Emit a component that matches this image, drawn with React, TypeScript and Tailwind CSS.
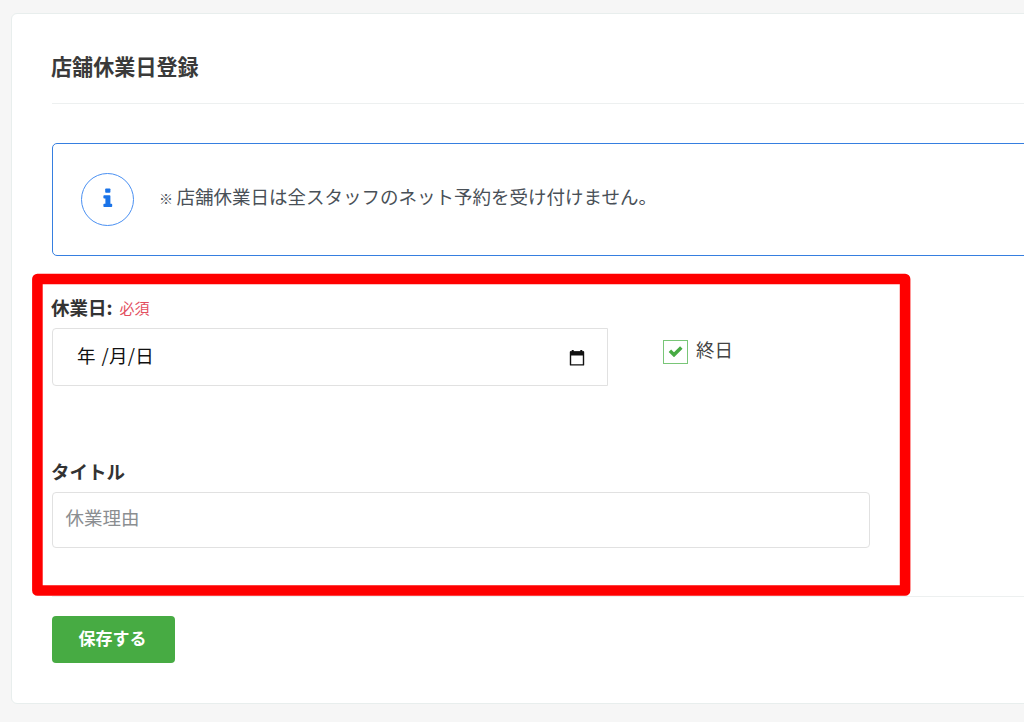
import React from "react";

const InfoIcon = () => (
  <div className="flex h-[53px] w-[53px] shrink-0 items-center justify-center rounded-full border border-[#4a90f2]">
    <svg className="-mt-1" width="10" height="20" viewBox="0 0 10 20" fill="#1a73e8">
      <rect x="2.2" y="0.4" width="5.2" height="4.4" rx="0.8" />
      <path d="M1.2 7.3h5.4a.8.8 0 0 1 .8.8v7.600h1a.8.8 0 0 1 .8.8v1.800a.8.8 0 0 1-.8.8H1.200a.8.8 0 0 1-.8-.8v-1.800a.8.8 0 0 1 .8-.8h1.200v-5.200H1.200a.8.8 0 0 1-.8-.8V8.100a.8.8 0 0 1 .8-.8z" />
    </svg>
  </div>
);

const CalendarIcon = () => (
  <svg className="mt-px" width="16" height="18" viewBox="0 0 16 18" fill="none">
    <path d="M1.500 3h13v12.900h-13z" stroke="#111" strokeWidth="1.4" strokeLinejoin="round" />
    <path d="M1 2.500h14v4H1zM2.700 1h2v2h-2zM11.300 1h2v2h-2z" fill="#111" />
  </svg>
);

const Checkbox = ({ label }: { label: string }) => (
  <label className="flex items-center">
    <span className="mt-px flex h-6 w-[25px] items-center justify-center border border-[#79c678]">
      <svg className="-mt-0.5" width="15" height="12" viewBox="0 0 15 12" fill="none">
        <path d="M1.900 5.800l4.100 4L13.300 2.400" stroke="#47ab43" strokeWidth="3.500" />
      </svg>
    </span>
    <span className="-mt-[5px] ml-2 text-[18.500px] leading-6 text-[#444]">
      {label}
    </span>
  </label>
);

const App = () => {
  return (
    <div className="relative h-[722px] w-[1024px] overflow-hidden bg-[#f6f6f6] pt-[13px] pl-[11px] font-['Noto_Sans_CJK_JP',sans-serif]">
      <main className="h-[691px] w-[1040px] rounded-md border border-[#e8eeed] bg-white pl-10">
        <h1 className="h-[90px] border-b border-[#edf0f0] pt-[37px] text-[21.100px] leading-[30px] font-bold text-[#3a3a3a]">
          <span className="-ml-px">店舗休業日登録</span>
        </h1>

        <div className="mt-[39px] flex h-[113px] items-center rounded-[5px] border border-[#367fe0] pl-[28px]">
          <InfoIcon />
          <p className="ml-[25px] flex items-center text-[18.500px] leading-7 text-[#495057]">
            <span className="-mt-1 mr-[3.500px] text-[14px] font-medium">※</span>
            <span className="-mt-[7px]">
              店舗休業日は全スタッフのネット予約を受け付けません。
            </span>
          </p>
        </div>

        <section className="h-[341px] border-b border-[#edf0f0] pt-[34px]">
          <div className="-ml-px flex h-[38px] items-start text-[18.500px] leading-[34px] font-bold text-[#333]">
            休業日:
            <span className="mt-px ml-[7px] text-[15px] font-normal text-[#e34f5f]">
              必須
            </span>
          </div>
          <div className="flex items-start">
            <div className="flex h-[58px] w-[556px] items-center justify-between rounded-l border border-[#e1e1e1] pr-[22px] pl-[24px]">
              <span className="-mt-1 text-[18.500px] leading-7 tracking-[0.2px] [word-spacing:1.5px] text-[#111]">
                年 /月/日
              </span>
              <CalendarIcon />
            </div>
            <div className="mt-[11px] ml-[55px]">
              <Checkbox label="終日" />
            </div>
          </div>

          <div className="mt-[68px] -ml-px flex h-[38px] items-start text-[18.500px] leading-[34px] font-bold text-[#333]">
            タイトル
          </div>
          <div className="flex h-[56px] w-[818px] items-center rounded border border-[#e1e1e1] pb-[6px] pl-[12.500px] text-[18.500px] leading-7 text-[#8b8e91]">
            休業理由
          </div>
        </section>

        <button
          type="button"
          className="mt-[19px] h-[47px] w-[123px] rounded bg-[#47ab43] pr-[2px] pb-[3px] text-[17px] font-bold text-white"
        >
          保存する
        </button>
      </main>

      <svg
        className="pointer-events-none absolute top-0 left-0"
        width="1024"
        height="722"
        fill="none"
      >
        <rect
          x="37.400"
          y="279"
          width="867.700"
          height="311.500"
          stroke="#ff0000"
          strokeWidth="10.600"
          strokeLinejoin="round"
        />
      </svg>
    </div>
  );
};

export default App;
